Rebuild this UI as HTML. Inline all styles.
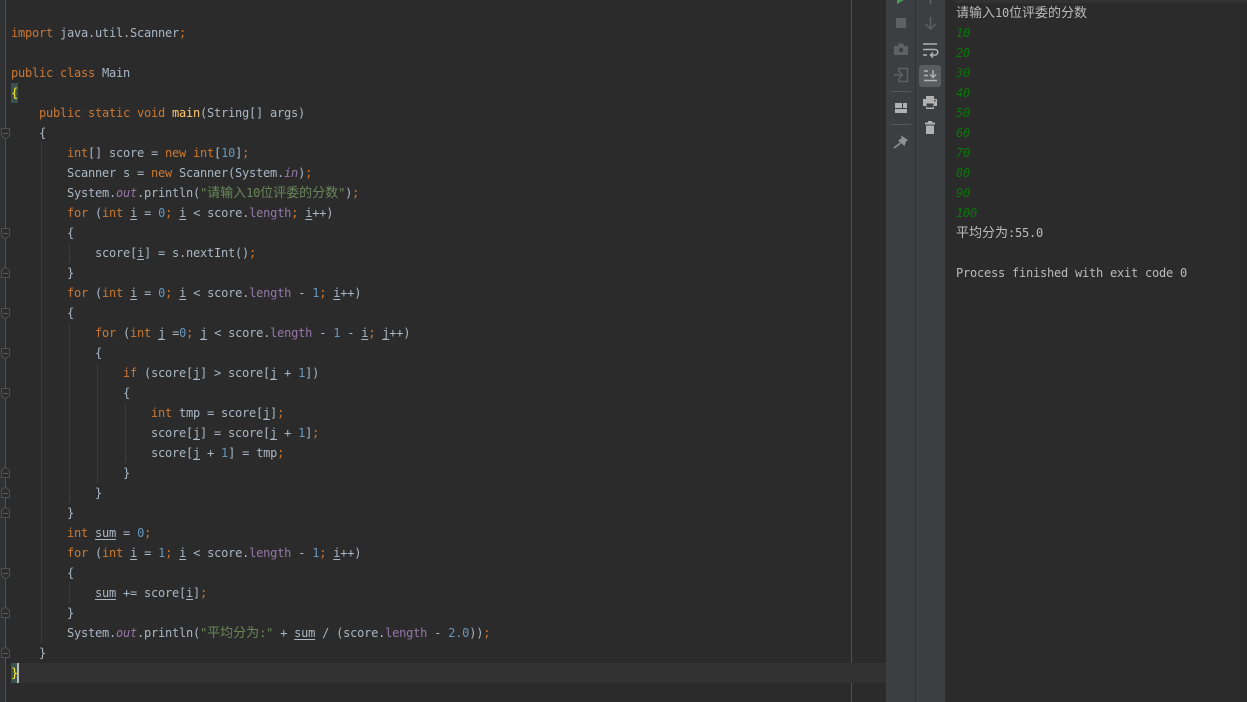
<!DOCTYPE html>
<html>
<head>
<meta charset="utf-8">
<style>
html,body{margin:0;padding:0;background:#2b2b2b;width:1247px;height:702px;overflow:hidden}
#root{position:relative;width:1247px;height:702px;overflow:hidden;font-family:"DejaVu Sans Mono","Liberation Mono",monospace;font-size:12px;letter-spacing:-0.224px;color:#a9b7c6}
.l{position:absolute;white-space:pre;height:20px;line-height:20px}
.k{color:#cc7832}.n{color:#6897bb}.s{color:#6a8759}.f{color:#9876aa}.o{color:#9876aa;font-style:italic}.m{color:#ffc66d}
.u{text-decoration:underline;text-underline-offset:2px}
.y{color:#ffef28}
.z{font-family:"WenQuanYi Zen Hei","Noto Sans CJK SC",sans-serif;font-size:13px;letter-spacing:0;line-height:0}
.g{color:#0a760a;font-style:italic}
.w{color:#bbbbbb}
.b{position:absolute}
.v{position:absolute;width:1px;background:#3b3b3b}
svg{position:absolute;left:0;top:0}
</style>
</head>
<body>
<div id="root">
<div class="b" style="left:0;top:0;width:5px;height:702px;background:#303132"></div>
<div class="b" style="left:5px;top:0;width:1px;height:702px;background:#505050"></div>
<div class="b" style="left:851px;top:0;width:1px;height:702px;background:#4e4e4e"></div>
<div class="b" style="left:11px;top:663px;width:875px;height:20px;background:#323232"></div>
<div class="b" style="left:11px;top:83px;width:7px;height:20px;background:#3b514d"></div>
<div class="b" style="left:11px;top:663px;width:7px;height:20px;background:#3b514d"></div>
<div class="b" style="left:17px;top:663px;width:2px;height:20px;background:#bbbbbb"></div>

<div class="v" style="left:41px;top:143px;height:500px"></div>
<div class="v" style="left:69px;top:243px;height:20px"></div>
<div class="v" style="left:69px;top:323px;height:180px"></div>
<div class="v" style="left:69px;top:583px;height:20px"></div>
<div class="v" style="left:97px;top:363px;height:120px"></div>
<div class="v" style="left:125px;top:403px;height:60px"></div>

<div class="l" style="left:11px;top:23px"><span class="k">import</span> java.util.Scanner<span class="k">;</span></div>
<div class="l" style="left:11px;top:63px"><span class="k">public class</span> Main</div>
<div class="l y" style="left:11px;top:83px">{</div>
<div class="l" style="left:39px;top:103px"><span class="k">public static void</span> <span class="m">main</span>(String[] args)</div>
<div class="l" style="left:39px;top:123px">{</div>
<div class="l" style="left:67px;top:143px"><span class="k">int</span>[] score = <span class="k">new int</span>[<span class="n">10</span>]<span class="k">;</span></div>
<div class="l" style="left:67px;top:163px">Scanner s = <span class="k">new</span> Scanner(System.<span class="o">in</span>)<span class="k">;</span></div>
<div class="l" style="left:67px;top:183px">System.<span class="o">out</span>.println(<span class="s">"<span class="z">请输入</span>10<span class="z">位评委的分数</span>"</span>)<span class="k">;</span></div>
<div class="l" style="left:67px;top:203px"><span class="k">for</span> (<span class="k">int</span> <span class="u">i</span> = <span class="n">0</span><span class="k">;</span> <span class="u">i</span> &lt; score.<span class="f">length</span><span class="k">;</span> <span class="u">i</span>++)</div>
<div class="l" style="left:67px;top:223px">{</div>
<div class="l" style="left:95px;top:243px">score[<span class="u">i</span>] = s.nextInt()<span class="k">;</span></div>
<div class="l" style="left:67px;top:263px">}</div>
<div class="l" style="left:67px;top:283px"><span class="k">for</span> (<span class="k">int</span> <span class="u">i</span> = <span class="n">0</span><span class="k">;</span> <span class="u">i</span> &lt; score.<span class="f">length</span> - <span class="n">1</span><span class="k">;</span> <span class="u">i</span>++)</div>
<div class="l" style="left:67px;top:303px">{</div>
<div class="l" style="left:95px;top:323px"><span class="k">for</span> (<span class="k">int</span> <span class="u">j</span> =<span class="n">0</span><span class="k">;</span> <span class="u">j</span> &lt; score.<span class="f">length</span> - <span class="n">1</span> - <span class="u">i</span><span class="k">;</span> <span class="u">j</span>++)</div>
<div class="l" style="left:95px;top:343px">{</div>
<div class="l" style="left:123px;top:363px"><span class="k">if</span> (score[<span class="u">j</span>] &gt; score[<span class="u">j</span> + <span class="n">1</span>])</div>
<div class="l" style="left:123px;top:383px">{</div>
<div class="l" style="left:151px;top:403px"><span class="k">int</span> tmp = score[<span class="u">j</span>]<span class="k">;</span></div>
<div class="l" style="left:151px;top:423px">score[<span class="u">j</span>] = score[<span class="u">j</span> + <span class="n">1</span>]<span class="k">;</span></div>
<div class="l" style="left:151px;top:443px">score[<span class="u">j</span> + <span class="n">1</span>] = tmp<span class="k">;</span></div>
<div class="l" style="left:123px;top:463px">}</div>
<div class="l" style="left:95px;top:483px">}</div>
<div class="l" style="left:67px;top:503px">}</div>
<div class="l" style="left:67px;top:523px"><span class="k">int</span> <span class="u">sum</span> = <span class="n">0</span><span class="k">;</span></div>
<div class="l" style="left:67px;top:543px"><span class="k">for</span> (<span class="k">int</span> <span class="u">i</span> = <span class="n">1</span><span class="k">;</span> <span class="u">i</span> &lt; score.<span class="f">length</span> - <span class="n">1</span><span class="k">;</span> <span class="u">i</span>++)</div>
<div class="l" style="left:67px;top:563px">{</div>
<div class="l" style="left:95px;top:583px"><span class="u">sum</span> += score[<span class="u">i</span>]<span class="k">;</span></div>
<div class="l" style="left:67px;top:603px">}</div>
<div class="l" style="left:67px;top:623px">System.<span class="o">out</span>.println(<span class="s">"<span class="z">平均分为</span>:"</span> + <span class="u">sum</span> / (score.<span class="f">length</span> - <span class="n">2.0</span>))<span class="k">;</span></div>
<div class="l" style="left:39px;top:643px">}</div>
<div class="l y" style="left:11px;top:663px">}</div>

<div class="b" style="left:886px;top:0;width:59px;height:702px;background:#3c3f41"></div>
<div class="b" style="left:915px;top:0;width:1px;height:702px;background:#323232"></div>
<div class="b" style="left:956px;top:0;width:291px;height:3px;background:#323232"></div>
<div class="b" style="left:919px;top:65px;width:22px;height:22px;border-radius:3px;background:#5a5d5f"></div>
<div class="b" style="left:891px;top:91px;width:20px;height:1px;background:#55585a"></div>
<div class="b" style="left:891px;top:124px;width:20px;height:1px;background:#55585a"></div>

<svg width="1247" height="702" viewBox="0 0 1247 702" fill="none">
<!-- fold markers -->
<g stroke="#4f4f4f" fill="#2b2b2b">
<path d="M1.5 128.5h8v7l-4 3.5-4-3.5z"/><path d="M1.5 228.5h8v7l-4 3.5-4-3.5z"/><path d="M1.5 308.5h8v7l-4 3.5-4-3.5z"/><path d="M1.5 348.5h8v7l-4 3.5-4-3.5z"/><path d="M1.5 388.5h8v7l-4 3.5-4-3.5z"/><path d="M1.5 568.5h8v7l-4 3.5-4-3.5z"/>
<path d="M1.5 277.5h8v-7l-4-3.5-4 3.5z"/><path d="M1.5 477.5h8v-7l-4-3.5-4 3.5z"/><path d="M1.5 497.5h8v-7l-4-3.5-4 3.5z"/><path d="M1.5 517.5h8v-7l-4-3.5-4 3.5z"/><path d="M1.5 617.5h8v-7l-4-3.5-4 3.5z"/><path d="M1.5 657.5h8v-7l-4-3.5-4 3.5z"/>
</g>
<g stroke="#5c5c5c"><path d="M3 133.5h5M3 233.5h5M3 313.5h5M3 353.5h5M3 393.5h5M3 573.5h5M3 273.5h5M3 473.5h5M3 493.5h5M3 513.5h5M3 613.5h5M3 653.5h5"/></g>

<!-- left column -->
<path d="M897 0h7l-7 4z" fill="#499c54"/>
<rect x="896" y="18" width="10" height="10" fill="#5f6163"/>
<path d="M894 46h3.500l1.500-2.500h4l1.500 2.500h3.500v9h-14z" fill="#5f6163"/><circle cx="901" cy="50" r="2.200" fill="#3c3f41"/>
<path d="M899 72v-3.500h8.500v13h-8.500v-3.500M894 75h8M899.500 72l3 3-3 3" stroke="#5f6163" stroke-width="1.500"/>
<path d="M895 103h7v5h-7zM903 103h4v5h-4zM895 109h12v4h-12z" fill="#afb1b3"/>
<path d="M901 135.500L908 140L906 141.500L904.500 146L898 140.500L901.500 138.500Z" fill="#8f9193"/>
<path d="M900.500 143L894 148" stroke="#8f9193" stroke-width="1.500"/>

<!-- right column -->
<path d="M930.500 0v4" stroke="#5f6163" stroke-width="1.500"/>
<path d="M930.500 17v12M925.500 24l5 5 5-5" stroke="#5f6163" stroke-width="1.500"/>
<path d="M923 44h14M923 49.500h12a2.500 2.500 0 0 1 0 5.500h-4M923 55h4M933 52.500l-2.500 2.500 2.500 2.500" stroke="#afb1b3" stroke-width="1.500"/>
<path d="M924 71h4M924 75.500h4M924 80.500h13M933 70v7M930 74.500l3 3 3-3" stroke="#afb1b3" stroke-width="1.500"/>
<path d="M926 96h8v3h3v7h-3v3h-8v-3h-3v-7h3z" fill="#afb1b3"/><rect x="926.500" y="103.500" width="7" height="4" fill="#3c3f41"/><rect x="934" y="100" width="1.500" height="1.500" fill="#3c3f41"/>
<path d="M928 121h4v1.500h3v2h-10v-2h3zM926 125.500h8v8.500h-8z" fill="#afb1b3"/>
</svg>

<div class="l w" style="left:956px;top:3px"><span class="z">请输入</span>10<span class="z">位评委的分数</span></div>
<div class="l g" style="left:956px;top:23px">10</div>
<div class="l g" style="left:956px;top:43px">20</div>
<div class="l g" style="left:956px;top:63px">30</div>
<div class="l g" style="left:956px;top:83px">40</div>
<div class="l g" style="left:956px;top:103px">50</div>
<div class="l g" style="left:956px;top:123px">60</div>
<div class="l g" style="left:956px;top:143px">70</div>
<div class="l g" style="left:956px;top:163px">80</div>
<div class="l g" style="left:956px;top:183px">90</div>
<div class="l g" style="left:956px;top:203px">100</div>
<div class="l w" style="left:956px;top:223px"><span class="z">平均分为</span>:55.0</div>
<div class="l w" style="left:956px;top:263px">Process finished with exit code 0</div>
</div>
</body>
</html>
